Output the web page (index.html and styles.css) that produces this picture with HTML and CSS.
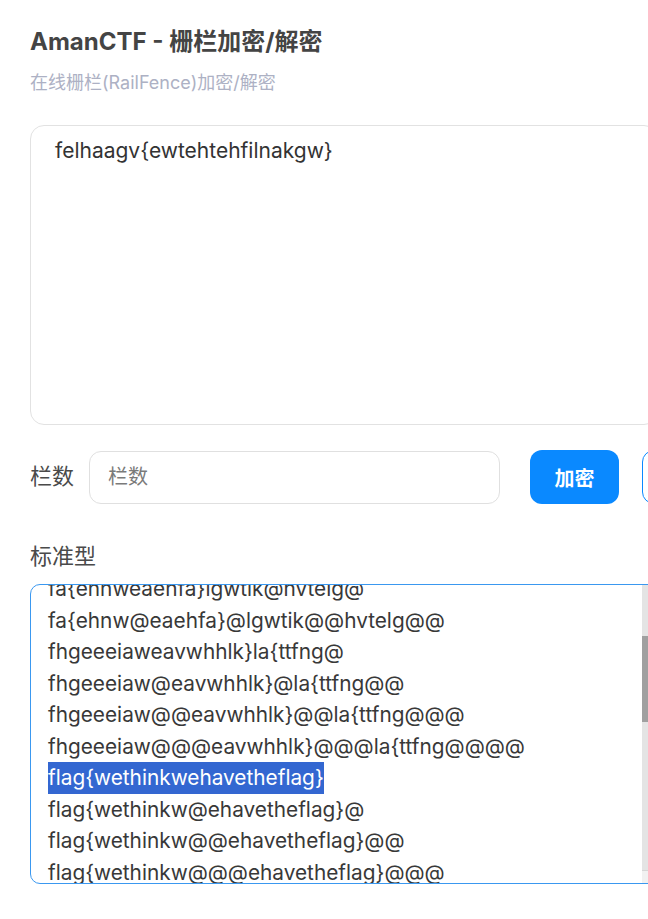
FILE: index.html
```html
<!DOCTYPE html>
<html lang="zh-CN">
<head>
    <meta charset="UTF-8">
    <meta name="viewport" content="width=device-width, initial-scale=1.0">
    <title>AmanCTF - 栅栏加密/解密</title>
    <link rel="stylesheet" href="styles.css">
</head>
<body>
    <div class="page">
        <h1 class="title">AmanCTF - 栅栏加密/解密</h1>
        <p class="subtitle">在线栅栏(RailFence)加密/解密</p>

        <textarea class="source" spellcheck="false">felhaagv{ewtehtehfilnakgw}</textarea>

        <div class="controls">
            <label class="field-label" for="rails">栏数</label>
            <input type="text" id="rails" class="rails-input" placeholder="栏数">
            <button class="btn btn-primary">加密</button>
            <button class="btn btn-outline">解密</button>
        </div>

        <div class="result-label">标准型</div>
        <div class="result">
            <div class="result-lines">
                <div class="line first">fa{ehnweaehfa}lgwtik@hvtelg@</div>
                <div class="line">fa{ehnw@eaehfa}@lgwtik@@hvtelg@@</div>
                <div class="line">fhgeeeiaweavwhhlk}la{ttfng@</div>
                <div class="line">fhgeeeiaw@eavwhhlk}@la{ttfng@@</div>
                <div class="line">fhgeeeiaw@@eavwhhlk}@@la{ttfng@@@</div>
                <div class="line">fhgeeeiaw@@@eavwhhlk}@@@la{ttfng@@@@</div>
                <div class="line"><span class="selected">flag{wethinkwehavetheflag}</span></div>
                <div class="line">flag{wethinkw@ehavetheflag}@</div>
                <div class="line">flag{wethinkw@@ehavetheflag}@@</div>
                <div class="line">flag{wethinkw@@@ehavetheflag}@@@</div>
            </div>
            <div class="scrollbar">
                <div class="scroll-thumb"></div>
                <div class="scroll-btn"></div>
            </div>
        </div>
    </div>
</body>
</html>
```

FILE: styles.css
```css
html, body {
    margin: 0;
    overflow: hidden;
    background: #fff;
}
body {
    font-family: 'Inter', 'Noto Sans CJK SC', sans-serif;
    color: #333;
}
.page {
    width: 900px;
    padding: 27px 0 0 30px;
}
.title {
    margin: 0;
    font-size: 24px;
    line-height: 30px;
    font-weight: 700;
    color: #444;
}
.subtitle {
    margin: 14px 0 0;
    font-size: 18px;
    line-height: 24px;
    color: #adb1c4;
}
.source {
    display: block;
    box-sizing: border-box;
    width: 628px;
    height: 300px;
    margin-top: 30px;
    padding: 10px 24px;
    border: 1px solid #e2e2e2;
    border-radius: 14px;
    font-family: inherit;
    font-size: 21px;
    line-height: 30px;
    color: #333;
    resize: none;
    outline: none;
}
.controls {
    display: flex;
    align-items: center;
    margin-top: 25px;
}
.field-label {
    font-size: 22px;
    line-height: 1;
    color: #4a4a4a;
    margin: 0 15px 3px 0;
}
.rails-input {
    box-sizing: border-box;
    width: 411px;
    height: 53px;
    padding: 0 18px;
    border: 1px solid #e0e0e0;
    border-radius: 12px;
    font-family: inherit;
    font-size: 20px;
    color: #333;
    outline: none;
}
.rails-input::placeholder {
    color: #7a7a7a;
}
.btn {
    box-sizing: border-box;
    height: 54px;
    padding: 0 24px;
    border-radius: 12px;
    font-family: inherit;
    font-size: 20px;
    font-weight: 700;
    cursor: pointer;
}
.btn-primary {
    margin-left: 30px;
    width: 89px;
    background: #0a89ff;
    border: none;
    color: #fff;
}
.btn-outline {
    margin-left: 23px;
    background: #fff;
    border: 1px solid #0a89ff;
    color: #0a89ff;
}
.result-label {
    margin-top: 37px;
    font-size: 22px;
    line-height: 30px;
    color: #4a4a4a;
}
.result {
    position: relative;
    box-sizing: border-box;
    width: 628px;
    height: 300px;
    margin-top: 13px;
    border: 1px solid #3a98f0;
    border-radius: 10px;
    overflow: hidden;
}
.result-lines {
    padding-left: 17px;
    font-size: 20.8px;
    line-height: 31.5px;
    color: #383838;
    white-space: nowrap;
}
.line.first {
    margin-top: -12px;
}
.selected {
    display: inline-block;
    background: #3367d1;
    color: #fff;
}
.scrollbar {
    position: absolute;
    top: 0;
    right: 0;
    bottom: 0;
    width: 15px;
    background: #e4e4e4;
}
.scroll-thumb {
    position: absolute;
    top: 51px;
    left: 0;
    right: 0;
    height: 86px;
    background: #a0a0a0;
}
.scroll-btn {
    position: absolute;
    left: 0;
    right: 0;
    bottom: 0;
    height: 12px;
    background: #f1f1f1;
    border-top: 1px solid #d6d6d6;
}
```
